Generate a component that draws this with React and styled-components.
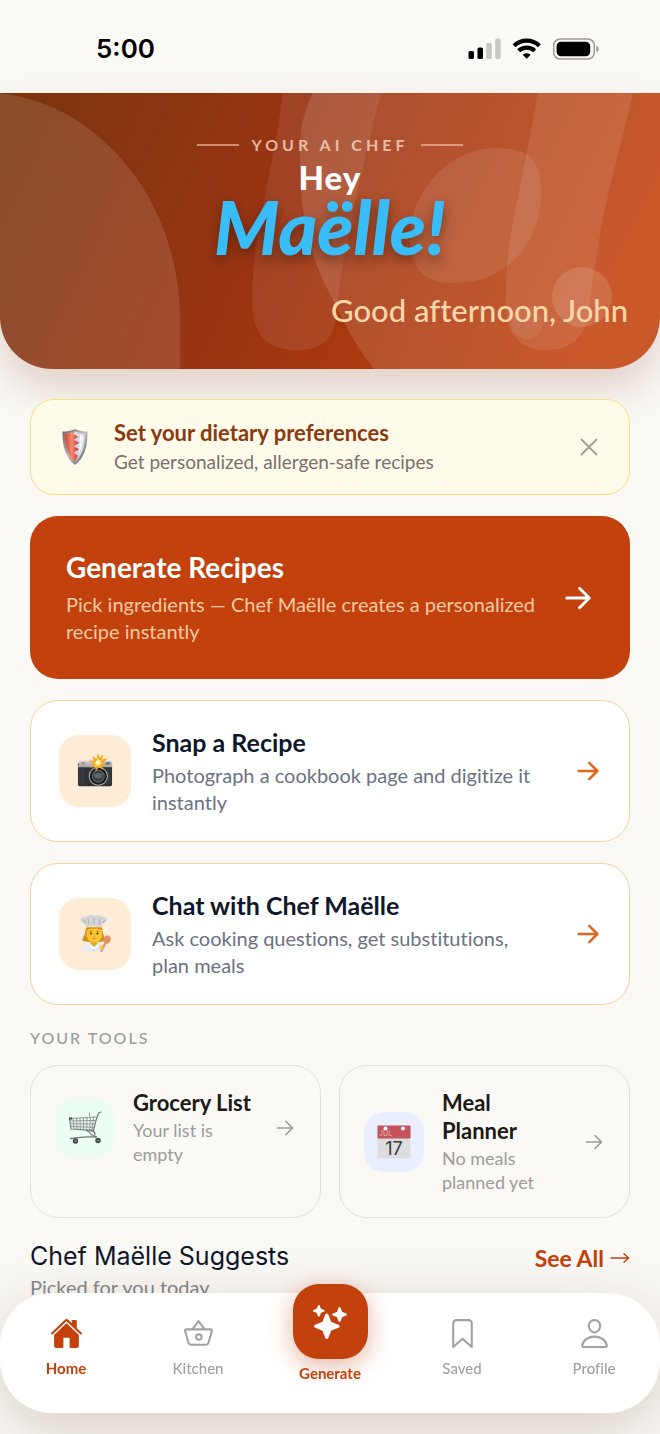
import React from 'react';
import styled, { createGlobalStyle } from 'styled-components';
import {
  IoHome,
  IoBasketOutline,
  IoSparkles,
  IoBookmarkOutline,
  IoPersonOutline,
} from 'react-icons/io5';

const GlobalStyle = createGlobalStyle`
  * {
    box-sizing: border-box;
  }
  body {
    margin: 0;
    background: #faf9f6;
    font-family: Lato, sans-serif;
    font-variant-ligatures: none;
    overflow-x: hidden;
  }
  h1, h2, h3, p {
    margin: 0;
  }
  a {
    color: inherit;
    text-decoration: none;
  }
`;

const StatusBar = styled.header`
  display: flex;
  align-items: center;
  justify-content: space-between;
  height: 93px;
  padding: 5px 61px 0 96px;
  color: #000;
`;

const Clock = styled.time`
  font: 600 26px/32px Inter, sans-serif;
`;

const Hero = styled.section`
  position: relative;
  display: flex;
  flex-direction: column;
  align-items: center;
  padding: 42px 32px 39px;
  overflow: hidden;
  border-radius: 0 0 52px 52px;
  background: linear-gradient(115deg, #78350f 0%, #9a3412 42%, #c2410c 90%);
`;

const HeroWrap = styled.div`
  border-radius: 0 0 52px 52px;
  box-shadow: 0 20px 40px rgba(124, 45, 18, 0.2);
`;

const HeroArt = styled.svg`
  position: absolute;
  inset: 0;
  width: 100%;
  height: 100%;
`;

const Eyebrow = styled.p`
  position: relative;
  display: flex;
  align-items: center;
  gap: 12px;
  color: rgba(255, 225, 205, 0.75);
  font-size: 16px;
  font-weight: 700;
  line-height: 20px;
  letter-spacing: 4px;

  &::before,
  &::after {
    content: '';
    width: 42px;
    height: 2px;
    background: rgba(255, 215, 185, 0.55);
  }
`;

const Hey = styled.h1`
  position: relative;
  display: flex;
  flex-direction: column;
  align-items: center;
  margin-top: 3px;
  color: #fff;
  font-size: 33px;
  font-weight: 900;
  line-height: 38px;
  letter-spacing: 1px;
`;

const ChefName = styled.span`
  color: #38bdf8;
  font-size: 74px;
  font-style: italic;
  line-height: 62px;
  letter-spacing: 0;
  text-shadow: 0 5px 12px rgba(60, 20, 5, 0.55);
`;

const Greeting = styled.p`
  position: relative;
  align-self: flex-end;
  margin-top: 32px;
  color: #fed7aa;
  font-size: 31px;
  font-weight: 500;
  line-height: 40px;
`;

const Content = styled.main`
  display: flex;
  flex-direction: column;
  gap: 21px;
  padding: 30px 30px 132px;
`;

const Banner = styled.aside`
  position: relative;
  display: flex;
  align-items: center;
  gap: 21px;
  padding: 18px 25px 18px 26px;
  border: 1px solid #f9e07e;
  border-radius: 24px;
  background: #fffbeb;
`;

const BannerText = styled.div`
  flex: 1;
`;

const BannerTitle = styled.h2`
  color: #8a3a0e;
  font-size: 22px;
  line-height: 30px;
`;

const BannerNote = styled.p`
  color: #78716c;
  font-size: 19px;
  line-height: 28px;
`;

const CloseButton = styled.button`
  display: flex;
  padding: 6px;
  border: 0;
  background: none;
  color: #a09d97;
  cursor: pointer;
`;

const ActionCard = styled.a`
  display: flex;
  align-items: center;
  gap: 21px;
  padding: 25px 26px 25px 28px;
  border: 1px solid #f9cf9b;
  border-radius: 28px;
  background: #fff;
  color: #e0661c;
`;

const PrimaryCard = styled(ActionCard)`
  gap: 16px;
  padding: 34px;
  padding-left: 36px;
  border: 0;
  background: #c2410c;
  color: #fff;
`;

const CardText = styled.div`
  flex: 1;
  min-width: 0;
`;

const CardTitle = styled.h2`
  color: ${({ $light }) => ($light ? '#fff' : '#0f172a')};
  font-size: ${({ $light }) => ($light ? 28 : 25)}px;
  line-height: ${({ $light }) => ($light ? 34 : 32)}px;
`;

const CardNote = styled.p`
  max-width: ${({ $light }) => ($light ? 'none' : '390px')};
  margin-top: ${({ $light }) => ($light ? 7 : 4)}px;
  color: ${({ $light }) => ($light ? '#fbc9a4' : '#6b7280')};
  font-size: 20px;
  line-height: 27px;
`;

const IconTile = styled.span`
  display: flex;
  align-items: center;
  justify-content: center;
  flex: none;
  width: ${({ $size }) => $size}px;
  height: ${({ $size }) => $size}px;
  border-radius: 20px;
  background: ${({ $tint }) => $tint};
`;

const SectionLabel = styled.h2`
  margin-bottom: -6px;
  color: #a09b96;
  font-size: 16px;
  font-weight: 500;
  line-height: 24px;
  letter-spacing: 2px;
`;

const Tools = styled.div`
  display: grid;
  grid-template-columns: 1fr 1fr;
  gap: 18px;
`;

const ToolCard = styled.a`
  padding: 23px 23px 23px 24px;
  border: 1px solid #e2e0de;
  border-radius: 28px;
  color: #a09b96;
`;

const ToolRow = styled.div`
  display: flex;
  align-items: center;
  gap: 18px;
`;

const ToolTitle = styled.h3`
  color: #1c1917;
  font-size: 22px;
  line-height: 28px;
`;

const ToolNote = styled.p`
  margin-top: 1px;
  font-size: 18px;
  line-height: 24px;
`;

const SuggestHeader = styled.div`
  display: flex;
  align-items: flex-start;
  justify-content: space-between;
`;

const SuggestTitle = styled.h2`
  color: #0f172a;
  font: 400 25px/34px Inter, sans-serif;
`;

const SuggestNote = styled.p`
  color: #85858c;
  font-size: 20px;
  line-height: 28px;
`;

const SeeAll = styled.a`
  display: flex;
  align-items: center;
  gap: 6px;
  color: #c2410c;
  font-size: 23px;
  font-weight: 700;
  line-height: 38px;
`;

const TabBar = styled.nav`
  position: fixed;
  right: 0;
  bottom: 21px;
  left: 0;
  display: grid;
  grid-template-columns: repeat(5, 1fr);
  height: 120px;
  border-radius: 52px;
  background: #fff;
  box-shadow: 0 16px 60px rgba(100, 50, 20, 0.22);
`;

const Tab = styled.a`
  display: flex;
  flex-direction: column;
  align-items: center;
  gap: 8px;
  padding-top: 24px;
  color: ${({ $active }) => ($active ? '#c2410c' : '#a3a09d')};
  font-size: 15px;
  font-weight: ${({ $active }) => ($active ? 700 : 500)};
  line-height: 20px;
`;

const GenerateTab = styled(Tab)`
  gap: 4px;
  margin-top: -9px;
  padding-top: 0;
`;

const GenerateIcon = styled.span`
  display: flex;
  align-items: center;
  justify-content: center;
  width: 75px;
  height: 75px;
  border-radius: 26px;
  background: #c2410c;
  color: #fff;
  box-shadow: 0 6px 24px rgba(194, 65, 12, 0.4);
`;

const Arrow = ({ size, weight }) => (
  <svg width={size} height={size} viewBox="0 0 24 24" fill="none" stroke="currentColor" strokeWidth={weight} strokeLinecap="round" strokeLinejoin="round" aria-hidden="true">
    <path d="M4.5 12h14.5M13 5.5l6.5 6.5-6.5 6.5" />
  </svg>
);

const ThinArrow = () => (
  <svg width="20" height="12" viewBox="0 0 20 12" fill="none" stroke="currentColor" strokeWidth="1.4" strokeLinecap="round" strokeLinejoin="round" aria-hidden="true">
    <path d="M1 6h17.5M14 1.8L18.6 6 14 10.2" />
  </svg>
);

const StatusIcons = () => (
  <svg width="131" height="22" viewBox="0 0 131 22" aria-hidden="true">
    <rect x="0.5" y="13" width="5.5" height="8" rx="1.6" />
    <rect x="9.5" y="9.5" width="5.5" height="11.5" rx="1.6" />
    <g fill="#c8c7c4">
      <rect x="18.3" y="5" width="5.5" height="16" rx="1.6" />
      <rect x="27.2" y="0.5" width="5.5" height="20.5" rx="1.6" />
    </g>
    <g fill="none" stroke="#000" strokeWidth="4.2">
      <path d="M46 7.8a18.3 18.3 0 0 1 25.4 0" />
      <path d="M50.7 12.8a11.6 11.6 0 0 1 16 0" />
    </g>
    <path d="M58.7 20.8l-4-4.1a5.9 5.9 0 0 1 8 0z" />
    <rect x="85.7" y="1" width="40.6" height="20" rx="6.5" fill="none" stroke="#9b9a97" strokeWidth="1.5" />
    <rect x="88.6" y="3.8" width="33.6" height="14.4" rx="4.5" />
    <path d="M128.4 7.8c1.5.5 2.3 1.7 2.3 3.2s-.8 2.7-2.3 3.2z" fill="#9b9a97" />
  </svg>
);

const Shield = () => (
  <svg width="36" height="36" viewBox="0 0 36 36" aria-hidden="true">
    <defs>
      <linearGradient id="shieldRim" x1="0" y1="0" x2="1" y2="1">
        <stop offset="0" stopColor="#5e6064" />
        <stop offset="0.5" stopColor="#b9bcc0" />
        <stop offset="1" stopColor="#4b4d50" />
      </linearGradient>
      <linearGradient id="shieldRed">
        <stop offset="0" stopColor="#c7422f" />
        <stop offset="0.5" stopColor="#f88a72" />
        <stop offset="1" stopColor="#b8362a" />
      </linearGradient>
    </defs>
    <path d="M18 0c4 2 8 2.500 12.500 2.500 0 14-2 25-12.500 33.500C7.500 27.500 5.500 16.500 5.500 2.500 10 2.500 14 2 18 0z" fill="url(#shieldRim)" />
    <path d="M18 2.200c3.500 1.500 6.500 2 10.300 2.200C28 17 26 25.500 18 33 10 25.500 8 17 7.700 4.400 11.500 4.200 14.500 3.700 18 2.200z" fill="#d3d8dd" />
    <path d="M18 2.200l-2 2.500 5 3-4 3 5 3-5 3.500 5 3-5 3.500 4 3-3 6.300C10 25.500 8 17 7.700 4.400 11.500 4.200 14.500 3.700 18 2.200z" fill="url(#shieldRed)" />
    <path d="M23 5.500l3 .7c0 7-1 13.500-4 18.500z" fill="#f4f6f8" />
  </svg>
);

const Camera = () => (
  <svg width="36" height="36" viewBox="0 0 38 38" aria-hidden="true">
    <defs>
      <linearGradient id="camTop" x1="0" y1="0" x2="0" y2="1">
        <stop offset="0" stopColor="#e6e8ea" />
        <stop offset="1" stopColor="#9ea2a6" />
      </linearGradient>
    </defs>
    <rect x="1" y="10" width="36" height="25" rx="2" fill="#2f3134" />
    <path d="M2 10.500c0-2 1-2.500 2.500-2.500h7L14 6h10l2.500 2H34c2 0 3 .8 3 2.500V15H1z" fill="url(#camTop)" />
    <rect x="5" y="10" width="3" height="2" fill="#e4634c" />
    <rect x="30" y="9.500" width="5" height="3" rx="1" fill="#777c82" />
    <path d="M3 16v17M5 16v17M7 16v17M33 16v17M35 16v17" stroke="#434649" strokeWidth="0.8" />
    <circle cx="22.500" cy="24.500" r="10.200" fill="#a9adb1" />
    <circle cx="22.500" cy="24.500" r="9" fill="#17191b" />
    <circle cx="22.500" cy="24.500" r="6.300" fill="#3a3e42" stroke="#85898d" strokeWidth="0.8" />
    <ellipse cx="22.500" cy="24" rx="4.500" ry="2.800" fill="#5d6771" />
    <path d="M22 0l1.800 5 4.200-3.600-1.600 5.200 6.100-.8-4.900 4.100 4.100 3.400-5.700-.4 1.200 5.100-4.100-3.200-3.400 4.600-.4-5.600-5.700 1.800 3.800-4.700-5-2.200 5.600-.7-2.300-4.800 4.800 2.900z" fill="#f7a51c" />
    <path d="M22 4.500l1.200 3.300 3.200-1-1.700 3 2.800 1.800-3.500.4.200 3.200-2.500-2.300-2.900 1.700 1.200-3.200-2.700-1.500 3.300-.5z" fill="#ffec76" />
    <circle cx="21.800" cy="9.700" r="1.700" fill="#fff" />
  </svg>
);

const Chef = () => (
  <svg width="38" height="38" viewBox="0 0 38 38" aria-hidden="true">
    <path d="M10 13c-1 6-2 9-4 12 3 2 7 2 12 2s9 0 12-2c-2-3-3-6-4-12z" fill="#d28a1c" />
    <path d="M5 37c.5-7 6-8.500 13-8.500S30.500 30 31 37z" fill="#e9edf1" />
    <path d="M14.500 25h7v4l-3.500 3-3.500-3z" fill="#eaa91c" />
    <path d="M14 28.500l4 4 4-4 1.500 2.500L18 35l-5.500-4z" fill="#fff" stroke="#c5ccd3" strokeWidth="0.500" />
    <path d="M10.500 12h15.500v7.500c0 5-3.500 8-7.800 8s-7.700-3-7.700-8z" fill="#fbc62f" />
    <path d="M10.500 12.500h15.500l-.3 2.500-4.700-1.500-8 .3-2.200 2.200z" fill="#d28a1c" />
    <circle cx="15" cy="18.500" r="1" fill="#4b2c12" />
    <circle cx="21.500" cy="18.500" r="1" fill="#4b2c12" />
    <path d="M13.500 16.500l2.500-.3M20.500 16.200l2.500.3" stroke="#8a5512" strokeWidth="0.700" />
    <path d="M18.200 19.500l-.5 2h1" fill="none" stroke="#cf8a14" strokeWidth="0.600" />
    <path d="M16 23.500c1.400.9 3 .9 4.400 0z" fill="#c9473a" />
    <path d="M4.500 5c-.5-2.500 3-4 5.500-3C12-.3 15.500-.3 18 1c2.500-1.300 6.500-1 8 1 3-1 6 .7 5 3.500-.6 1.800-2.500 3-4.500 3L26 12.500c-4-1.500-12-1.500-15.500 0L9 8.500C6.500 8.500 4.800 7 4.500 5z" fill="#d2d4d6" />
    <path d="M12 3.500l1 6M18 3v6M24 3.500l-1 6M8 5l2 3.500M29 5l-2.500 3" stroke="#9da1a5" strokeWidth="0.700" />
    <g fill="#dd9468">
      <ellipse cx="31" cy="24.500" rx="3.500" ry="4.300" transform="rotate(28 31 24.500)" />
      <path d="M28.300 27.500l2 1.200-4.300 8.300h-2z" />
    </g>
    <circle cx="25.500" cy="32.500" r="2" fill="#fbc62f" />
    <circle cx="18" cy="35" r="0.600" fill="#8795a3" />
  </svg>
);

const Cart = () => (
  <svg width="34" height="34" viewBox="0 0 34 34" fill="none" stroke="#8b8d8f" strokeWidth="0.900" strokeLinecap="round" aria-hidden="true">
    <path d="M33 1l-2 .8c-2.500 3.500-3.500 10-5.500 17.500L3 18 1.500 7.500" stroke="#747678" strokeWidth="1.200" />
    <path d="M1.500 7.500L28 6M2 10l25.500-.5M2.500 12.800l24.500.2M2.700 15.500l23.300.7" />
    <path d="M5 7.300l1 10.900M8.500 7.200l.7 11.200M12 7l.3 11.500M15.500 6.800v12M19 6.600l-.3 12.400M22.500 6.400l-.8 12.800M25.500 6.200L24 19.300" />
    <path d="M18.500 19.500c3 0 3 3.500 5.500 4.500 2.500 1 3.500 1.500 3.500 2.500M22 19.500c3.500 0 5 1.500 5 4M2.500 27.500c8-1.500 17-1.500 26-2" stroke="#747678" strokeWidth="1.300" />
    <path d="M21.500 5V2" />
    <rect x="1" y="6.500" width="3" height="2" fill="#3d4043" stroke="none" />
    <g fill="#3f4144" stroke="none">
      <circle cx="7.500" cy="30" r="2.700" />
      <circle cx="30" cy="29.500" r="2.700" />
    </g>
    <circle cx="7.500" cy="30" r="0.700" fill="#b9bbbd" />
    <circle cx="30" cy="29.500" r="0.700" fill="#b9bbbd" />
  </svg>
);

const CalendarText = styled.text`
  font-family: Inter, sans-serif;
  font-size: ${({ $size }) => $size}px;
`;

const Calendar = () => (
  <svg width="34" height="34" viewBox="0 0 34 34" overflow="visible" aria-hidden="true">
    <rect x="0.500" y="0.500" width="33" height="33" rx="1" fill="#dddddf" />
    <path d="M.5 1.500a1 1 0 0 1 1-1h31a1 1 0 0 1 1 1V13.500H.5z" fill="#c4545a" />
    <circle cx="8.500" cy="3.500" r="2" fill="#fff" />
    <circle cx="26" cy="3.500" r="2" fill="#fff" />
    <CalendarText $size={7} x="2" y="11" fill="#e9b3b5">JUL</CalendarText>
    <CalendarText $size={18} x="17" y="30" textAnchor="middle" fill="#36383c">17</CalendarText>
  </svg>
);

const actions = [
  { title: 'Snap a Recipe', note: 'Photograph a cookbook page and digitize it instantly', Icon: Camera },
  { title: 'Chat with Chef Maëlle', note: 'Ask cooking questions, get substitutions, plan meals', Icon: Chef },
];

const tools = [
  { title: 'Grocery List', note: 'Your list is empty', tint: '#ecfdf3', Icon: Cart },
  { title: 'Meal Planner', note: 'No meals planned yet', tint: '#eaefff', Icon: Calendar },
];

export default function App() {
  const [bannerOpen, setBannerOpen] = React.useState(true);

  return (
    <>
      <GlobalStyle />
      <StatusBar>
        <Clock>5:00</Clock>
        <StatusIcons />
      </StatusBar>

      <HeroWrap>
        <Hero>
          <HeroArt viewBox="0 0 660 276" preserveAspectRatio="xMidYMid slice" fill="#fff" aria-hidden="true">
            <path d="M-20 -1A200 228 0 0 1 180 227V276H-20z" fillOpacity="0.12" />
            <path d="M283 -4C276 60 262 110 255 160c-3 30-3 45-2 60 3 25 18 37 43 37s37-10 40-32c3-40 10-70 15-95 10-50 20-90 31-134z" fillOpacity="0.08" />
            <path d="M315 -4C302 20 299 40 300 75c1 50 10 90 32 130 12 26 24 48 42 71h290V-4z" fillOpacity="0.13" />
            <path d="M538 -4C532 40 520 90 510 145c-4 30-5 55-4 75 3 25 18 37 40 37s38-10 42-34c3-25 6-45 10-70 8-50 22-95 36-157z" fillOpacity="0.09" />
            <path d="M497 55c33 0 44 12 44 45 0 48-32 90-88 90-32 0-43-18-43-45 0-45 37-90 87-90z" fillOpacity="0.09" />
            <circle cx="582" cy="204" r="30" fillOpacity="0.13" />
            <circle cx="527" cy="230" r="16" fillOpacity="0.07" />
          </HeroArt>
          <Eyebrow>YOUR AI CHEF</Eyebrow>
          <Hey>
            Hey
            <ChefName>Maëlle!</ChefName>
          </Hey>
          <Greeting>Good afternoon, John</Greeting>
        </Hero>
      </HeroWrap>

      <Content>
        {bannerOpen && (
          <Banner>
            <Shield />
            <BannerText>
              <BannerTitle>Set your dietary preferences</BannerTitle>
              <BannerNote>Get personalized, allergen-safe recipes</BannerNote>
            </BannerText>
            <CloseButton aria-label="Dismiss" onClick={() => setBannerOpen(false)}>
              <svg width="18" height="18" viewBox="0 0 18 18" stroke="currentColor" strokeWidth="1.800" strokeLinecap="round">
                <path d="M1.500 1.500l15 15M16.500 1.500l-15 15" />
              </svg>
            </CloseButton>
          </Banner>
        )}

        <PrimaryCard href="#generate">
          <CardText>
            <CardTitle $light>Generate Recipes</CardTitle>
            <CardNote $light>Pick ingredients — Chef Maëlle creates a personalized recipe instantly</CardNote>
          </CardText>
          <Arrow size={36} weight={2} />
        </PrimaryCard>

        {actions.map(({ title, note, Icon }) => (
          <ActionCard key={title} href="#action">
            <IconTile $size={72} $tint="#ffecd6">
              <Icon />
            </IconTile>
            <CardText>
              <CardTitle>{title}</CardTitle>
              <CardNote>{note}</CardNote>
            </CardText>
            <Arrow size={30} weight={2} />
          </ActionCard>
        ))}

        <SectionLabel>YOUR TOOLS</SectionLabel>
        <Tools>
          {tools.map(({ title, note, tint, Icon }) => (
            <ToolCard key={title} href="#tool">
              <ToolRow>
                <IconTile $size={60} $tint={tint}>
                  <Icon />
                </IconTile>
                <CardText>
                  <ToolTitle>{title}</ToolTitle>
                  <ToolNote>{note}</ToolNote>
                </CardText>
                <Arrow size={24} weight={1.7} />
              </ToolRow>
            </ToolCard>
          ))}
        </Tools>

        <SuggestHeader>
          <div>
            <SuggestTitle>Chef Maëlle Suggests</SuggestTitle>
            <SuggestNote>Picked for you today</SuggestNote>
          </div>
          <SeeAll href="#all">
            See All <ThinArrow />
          </SeeAll>
        </SuggestHeader>
      </Content>

      <TabBar>
        <Tab href="#home" $active>
          <IoHome size={33} />
          Home
        </Tab>
        <Tab href="#kitchen">
          <IoBasketOutline size={33} />
          Kitchen
        </Tab>
        <GenerateTab href="#generate" $active>
          <GenerateIcon>
            <IoSparkles size={34} />
          </GenerateIcon>
          Generate
        </GenerateTab>
        <Tab href="#saved">
          <IoBookmarkOutline size={33} />
          Saved
        </Tab>
        <Tab href="#profile">
          <IoPersonOutline size={33} />
          Profile
        </Tab>
      </TabBar>
    </>
  );
}
